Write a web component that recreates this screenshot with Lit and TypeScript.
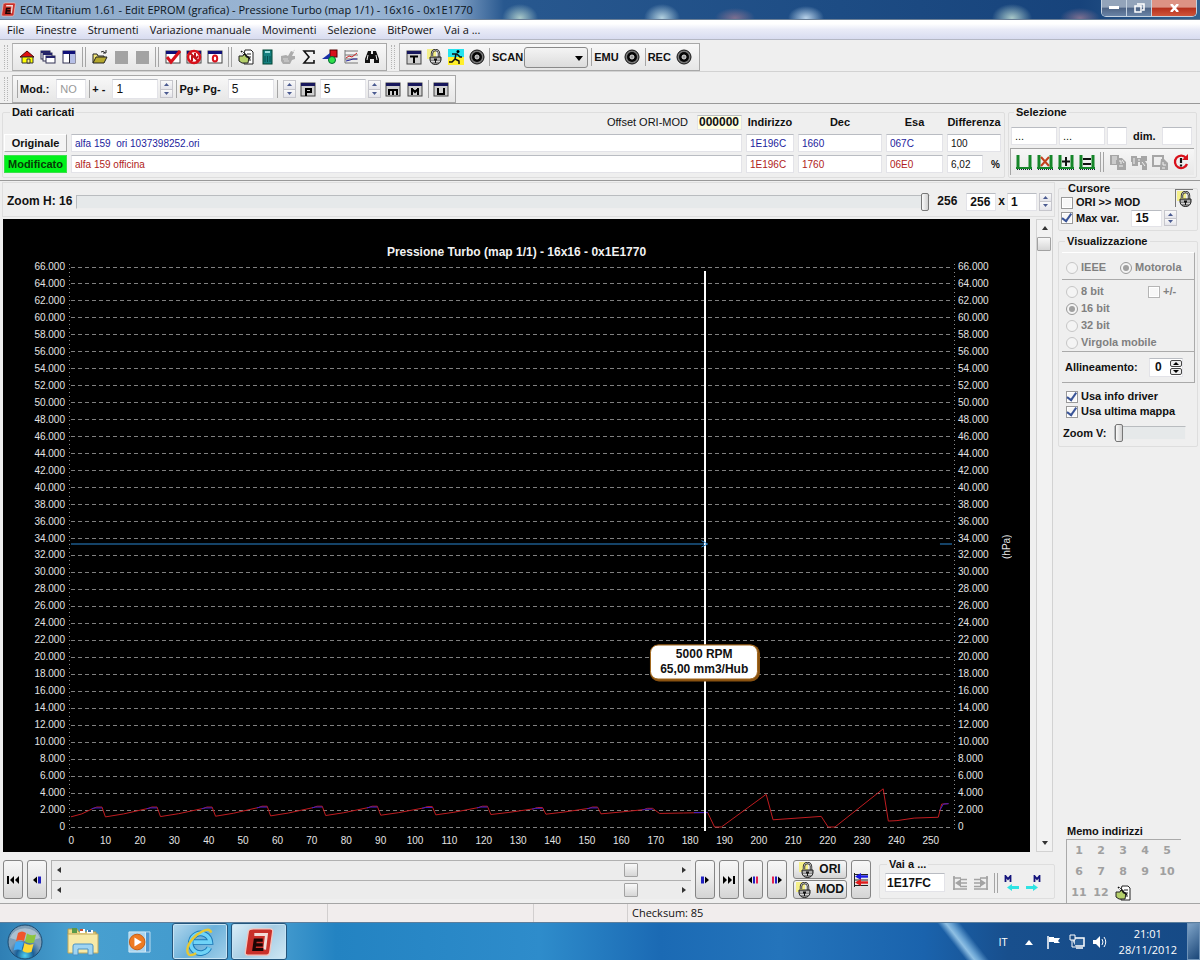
import { LitElement, html, svg, css, nothing } from "lit";
import { customElement, property } from "lit/decorators.js";
import { styleMap } from "lit/directives/style-map.js";

/* ---------- icons ---------- */

const windowFrame = svg`<rect x="1" y="2" width="14" height="12" fill="#fff" stroke="#444"/><rect x="1" y="2" width="14" height="3" fill="#101078"/>`;
const tile = (glyph: unknown) => svg`
  <rect x="1" y="2" width="14" height="13" fill="#d0d0d0" stroke="#444"/>
  <rect x="1" y="2" width="14" height="3" fill="#17175c"/>
  <g fill="none" stroke="#000" stroke-width="2">${glyph}</g>`;
const padlock = (x: number) => svg`
  <path d="M${x + 2} 7V4.500a3.500 3.500 0 0 1 7 0V8" fill="none" stroke="#222" stroke-width="2.400"/>
  <path d="M${x + 2} 7V4.500a3.500 3.500 0 0 1 7 0V8" fill="none" stroke="#ddd" stroke-width=".8"/>
  <path d="M${x} 8h11v3q-1 4.500-5.500 4.500t-5.500-4.500z" fill="#8a8a8a" stroke="#222"/>
  <path d="M${x + 1} 10h9M${x + 1} 12.500h9" stroke="#d5d5d5"/>
  <path d="M${x + 4} 9.500h3v2h-1v2.500h-1v-2.500h-1z" fill="#111"/>`;
const comb = svg`<path d="M2 1v13M14 1v13" stroke="#16862a" stroke-width="3"/><path d="M0 14h16" stroke="#16862a" stroke-width="2"/><path d="M1 15.500h15" stroke="#123" stroke-dasharray="1 1"/>`;

const icons: Record<string, unknown> = {
  app: svg`<path d="M5 1h9q1.500 0 1.300 1.500l-1.600 11q-.2 1.500-1.700 1.500H2Q.500 15 .7 13.500L2.300 2.500Q2.500 1 5 1z" fill="#c9302a" stroke="#f3c5bf" stroke-width=".7"/>
    <path d="M5.500 4h6.500l-1 8" fill="none" stroke="#f2dcd8" stroke-width="1.500"/><path d="M10 7H6l-.7 5h5M6 9.500h4" fill="none" stroke="#1c0504" stroke-width="1.700"/>`,
  home: svg`<path d="M1 8l7-6 7 6z" fill="#e01010" stroke="#500"/><path d="M3 8h11v6H3z" fill="#ff0" stroke="#333"/><path d="M8 10h3v4H8z" fill="#fff08a" stroke="#333"/>`,
  cascade: svg`<rect x="1" y="2" width="9" height="8" fill="#fff" stroke="#335"/><rect x="1" y="2" width="9" height="2" fill="#22226a"/><rect x="3" y="4" width="9" height="8" fill="#fff" stroke="#335"/><rect x="3" y="4" width="9" height="2" fill="#22226a"/><rect x="6" y="7" width="9" height="7" fill="#fff" stroke="#335"/><rect x="6" y="7" width="9" height="2" fill="#22226a"/>`,
  tile: svg`<rect x="2" y="2" width="12" height="12" fill="#fff" stroke="#335"/><rect x="2" y="2" width="12" height="3" fill="#101078"/><rect x="9" y="5" width="5" height="9" fill="#b6bfe6"/><path d="M8.500 5v9" stroke="#223"/>`,
  open: svg`<path d="M1 14V5h4l1 2h6v2" fill="#f3e77a" stroke="#222"/><path d="M1 14l3-6h11l-3 6z" fill="#b6a92e" stroke="#222"/><path d="M9 3q3-2 4 1M11 4h3V1" fill="none" stroke="#222"/>`,
  blank: svg`<rect x="2" y="2" width="13" height="13" fill="#a3a3a3"/>`,
  check: svg`${windowFrame}<path d="M2 8l4 5 9-11" fill="none" stroke="#d8111b" stroke-width="3"/>`,
  forbid: svg`${windowFrame}<circle cx="8" cy="8" r="6" fill="#fff" stroke="#d8111b" stroke-width="2.500"/><path d="M4 4l8 8M9 4v5M6 7v5M10 10l2-3" stroke="#c01018" stroke-width="2"/>`,
  zero: svg`${windowFrame}<ellipse cx="8" cy="9.500" rx="2.200" ry="3" fill="none" stroke="#d8111b" stroke-width="2"/>`,
  note: svg`<path d="M7 1h6l2 2v12H6V5z" fill="#fff" stroke="#222"/><path d="M9 5h4M9 8h4M10 11h3" stroke="#222"/><path d="M1 7h4l1-2h2v3h3l-1 6H4l-3-2z" fill="#b4cf6a" stroke="#222"/><path d="M3 2l9 8" stroke="#111" stroke-width="1.500"/><path d="M4 3l2 2" stroke="#fff"/>`,
  calc: svg`<rect x="4" y="1" width="9" height="14" fill="#168080" stroke="#043"/><path d="M6 3h5" stroke="#9dd" stroke-width="2"/><path d="M6 7v6M8.500 7v6M11 7v6" stroke="#065050"/>`,
  hand: svg`<path d="M1 7l5-1 2 1 3-5 3 1-2 4h3v3l-3 1-2 4H3l-2-3z" fill="#ababab"/><path d="M3 10h5M4 12h5M12 3l3-2" stroke="#d6d6d6"/>`,
  sum: svg`<path d="M13 5V2H3l5 6-5 6h10v-3" fill="none" stroke="#111" stroke-width="1.600"/>`,
  shapes: svg`<rect x="8" y="1" width="7" height="7" fill="#d8111b" stroke="#500"/><path d="M0 10l8-6v6z" fill="#1b2fa8"/><circle cx="10" cy="11" r="3.500" fill="#2fe04a" stroke="#063"/>`,
  lines: svg`<path d="M2 1v13h13M2 2h13M2 6h13M2 10h13" fill="none" stroke="#777"/><path d="M3 9l3-2 3 1 5-4" fill="none" stroke="#c22"/><path d="M3 12l4-1 3-1 4 0" fill="none" stroke="#229"/>`,
  find: svg`<path d="M4 2h3v3h2V2h3l3 8v4h-5v-4H6v4H1v-4z" fill="#111"/><path d="M4 6l-1 5M12 6l1 5" stroke="#eee"/>`,
  T: tile(svg`<path d="M4 7.500h8M8 7v7"/>`),
  P: tile(svg`<path d="M6 15V8h5v3H6"/>`),
  m: tile(svg`<path d="M4 14V9h8v5M8 9v5"/>`),
  M: tile(svg`<path d="M5 14V7M11 14V7M5 8l3 3 3-3"/>`),
  U: tile(svg`<path d="M5 7v6h6V7"/>`),
  lock: svg`<rect x="0" y="0" width="9" height="10" fill="#f5f08a"/>${padlock(3)}`,
  run: svg`<rect width="16" height="8" fill="#25e3ef"/><rect y="8" width="16" height="8" fill="#ffef29"/><circle cx="10" cy="2.500" r="1.500"/><path d="M4 5l5 0 3 3h2M8 5l-1 5 4 2v3M7 10l-3 3-3 0" fill="none" stroke="#111" stroke-width="1.500"/>`,
  disc: svg`<circle cx="8" cy="8" r="7" fill="#777" stroke="#111"/><circle cx="8" cy="8" r="5" fill="#050505"/><circle cx="8" cy="8" r="2" fill="#999" stroke="#ddd"/>`,
  sel1: comb,
  sel2: svg`${comb}<path d="M4 3l8 9M12 3l-8 9" stroke="#c4411d" stroke-width="2"/>`,
  sel3: svg`${comb}<path d="M8 3v9M4 7.500h8" stroke="#111" stroke-width="2"/>`,
  sel4: svg`${comb}<path d="M4 5h8M4 10h8" stroke="#111" stroke-width="2"/>`,
  cp1: svg`<path d="M0 1h9v3h3l4 4v8H7v-5H0z" fill="#a6a6a6"/><path d="M2 3h5M2 5h5M2 7h4M2 9h4M9 7h2v3M9 12h4M12 6l2 3" stroke="#f0f0f0" fill="none"/>`,
  cp2: svg`<path d="M0 2h6v2h4V2h6v5h-2l2 3v6h-5v-5H9V8H7v4H1V8H0z" fill="#a6a6a6"/><path d="M3 4v6M11 8l3 4M8 5v2" stroke="#f0f0f0"/>`,
  cp3: svg`<path d="M1 2h10v10H1z" fill="#eee" stroke="#a6a6a6" stroke-width="2"/><path d="M9 5h3l4 4v7H8v-3z" fill="#a6a6a6"/><path d="M11 8v3h3M10 14h3" fill="none" stroke="#f0f0f0"/>`,
  reload: svg`<path d="M13 4a6.200 6.200 0 1 0 1 6" fill="none" stroke="#d8111b" stroke-width="2.300"/><path d="M15 0v6h-6z" fill="#d8111b"/><path d="M8 4v5M8 10.500v2" stroke="#111" stroke-width="2.200"/>`,
  first: svg`<path d="M2 4h2v8H2zM9 4v8L5 8zM14 4v8l-4-4z"/>`,
  prev: svg`<path d="M8 4.500v7L4 8z"/><path d="M9 4.500h3v7H9z" fill="#2020c0"/>`,
  next: svg`<path d="M4 4.500h3v7H4z" fill="#2020c0"/><path d="M8 4.500v7l4-3.500z"/>`,
  last: svg`<path d="M2 4v8l4-4zM7 4v8l4-4zM12 4h2v8h-2z"/>`,
  prev2: svg`<path d="M7 4.500v7L3 8z"/><path d="M8 4.500h2v7H8z" fill="#2020c0"/><path d="M11 4.500h2v7h-2z" fill="#e02050"/>`,
  next2: svg`<path d="M3 4.500h2v7H3z" fill="#e02050"/><path d="M6 4.500h2v7H6z" fill="#2020c0"/><path d="M9 4.500v7L13 8z"/>`,
  swap: svg`<path d="M1.500 1v14M1 2.500h14M1 8h14M1 13.500h14" stroke="#222" fill="none"/><path d="M4 4.500h11" stroke="#1a1ae0" stroke-width="2.400"/><path d="M8 1v7L2 4.500z" fill="#1a1ae0"/><path d="M4 10.500h11" stroke="#e01a1a" stroke-width="2.400"/><path d="M8 7v7l-6-3.500z" fill="#e01a1a"/>`,
  goLeft: svg`<path d="M2 1v14M1 3h8M8 8h7M8 4.500h7M8 11.500h7M1 14h14" fill="none" stroke="#a3a3a3" stroke-width="1.700"/><path d="M9 4v8L3 8z" fill="#a3a3a3"/>`,
  goRight: svg`<path d="M14 1v14M15 3H7M8 8H1M8 4.500H1M8 11.500H1M15 14H1" fill="none" stroke="#a3a3a3" stroke-width="1.700"/><path d="M7 4v8l6-4z" fill="#a3a3a3"/>`,
  memLeft: svg`<path d="M1.500 7V1l2.500 3 2.500-3v6" fill="none" stroke="#14147c" stroke-width="1.800"/><path d="M6 12.500h9" stroke="#2fe3e3" stroke-width="3"/><path d="M8 9v7l-5-3.500z" fill="#2fe3e3"/>`,
  memRight: svg`<path d="M9.500 7V1l2.500 3 2.500-3v6" fill="none" stroke="#14147c" stroke-width="1.800"/><path d="M1 12.500h9" stroke="#2fe3e3" stroke-width="3"/><path d="M8 9v7l5-3.500z" fill="#2fe3e3"/>`,
};

const icon = (name: string, size = 16) => html`<svg
  class="icon" width=${size} height=${size} viewBox="0 0 16 16" fill="#000" aria-hidden="true">${icons[name]}</svg>`;

/* ---------- shared styles ---------- */

const controls = css`
  * { box-sizing: border-box; }
  button { font: inherit; color: inherit; background: none; border: 0; padding: 0; display: inline-flex; align-items: center; justify-content: center; flex: none; }
  input[type="text"] { font: inherit; color: inherit; min-width: 0; margin: 0; padding: 0 3px; background: #fff; border: 1px solid #e3e3e8; border-top-color: #b9bcc2; border-radius: 0; height: 18px; }
  .icon { display: block; flex: none; }
  .sep { width: 1px; align-self: stretch; background: #a5a5a5; flex: none; }
  .sep2 { width: 4px; height: 20px; border: solid #a5a5a5; border-width: 0 1px; margin: 0 3px; flex: none; }
`;

@customElement("spin-buttons")
export class SpinButtons extends LitElement {
  @property() label = "";
  static styles = [controls, css`
    :host { display: inline-flex; flex-direction: column; width: 13px; height: 18px; flex: none; }
    button { flex: 1; background: linear-gradient(#fafafa, #e4e4ea); border: 1px solid #c6c6cc; }
    button + button { border-top: 0; }
    svg { display: block; }
  `];
  render() {
    return html`
      <button aria-label="${this.label} +"><svg width="5" height="3"><path d="M0 3l2.500-3L5 3z" fill="#4a5a90"/></svg></button>
      <button aria-label="${this.label} -"><svg width="5" height="3"><path d="M0 0l2.500 3L5 0z" fill="#4a5a90"/></svg></button>`;
  }
}

/* ---------- chart ---------- */

const SPAN = 256;
const TOP = 66000;
const yTicks = Array.from({ length: 34 }, (_, i) => TOP - i * 2000);
const xTicks = Array.from({ length: 26 }, (_, i) => i * 10);
const fmt = (v: number) => (v === 0 ? "0" : `${v / 1000}.000`);

type Point = [number, number];
const peaks = [2350, 2350, 2350, 2450, 2450, 2450, 2400, 2450, 2300, 2350, 2200];
const ramps: Point[] = [];
const crests: Point[][] = [];
peaks.forEach((peak, i) => {
  const end = 9 + i * 16;
  const low = i === 0 ? 1200 : 1150 + i * 40;
  const start = i === 0 ? 0 : end - 15;
  ramps.push([start, low], [start + (end - start) * 0.35, low + (peak - low) * 0.3], [end - 2.5, peak - 150], [end - 1.5, peak], [end, peak]);
  crests.push([[end - 3, peak - 200], [end - 2, peak - 100], [end, peak - 100]]);
});
const trace: Point[] = [
  ...ramps, [171, 1600], [178, 1650], [185, 1700], [187, 0], [189, 0], [202, 3850], [204, 850],
  [218, 1250], [220, 0], [222, 0], [236, 4500], [237.5, 700], [240, 750], [245, 1050], [252, 1150], [253, 2700], [255, 2750],
];
const poly = (points: Point[]) => points.map(([x, v]) => `${x},${TOP - v}`).join(" ");

@customElement("map-chart")
export class MapChart extends LitElement {
  @property({ type: Number }) cursor = 184;
  static styles = css`
    :host { display: grid; grid-template-columns: 62px minmax(0, 1fr) 31px 24px; column-gap: 6px; grid-template-rows: 18px minmax(300px, 1fr) 12px;
      background: #000; color: #e4e4e4; padding: 24px 11px 7px 0; font-size: 10px; line-height: 12px; row-gap: 6px; min-width: 0; }
    .title { grid-column: 1 / -1; margin-right: -11px; font-size: 12px; font-weight: bold; line-height: 18px; text-align: center; color: #f2f2f2; }
    .scale { display: flex; flex-direction: column; justify-content: space-between; margin: -6px 0; }
    .left { text-align: right; }
    .plot { position: relative; }
    .plot::before, .plot::after { content: ""; position: absolute; top: -3px; bottom: -4px; width: 1px; left: -2px;
      background: repeating-linear-gradient(#8a8a8a 0 1px, #000 1px 4px); }
    .plot::after { left: auto; right: -3px; }
    .lines { position: absolute; inset: 0; width: 100%; height: 100%; overflow: visible; }
    .lines * { vector-effect: non-scaling-stroke; fill: none; }
    .grid { stroke: #808080; stroke-dasharray: 4 3; shape-rendering: crispEdges; }
    .flat { stroke: #2a86d0; }
    .mod { stroke: #c01c20; }
    .ori { stroke: #4020c8; }
    .cursor { position: absolute; top: 4px; bottom: -4px; width: 2px; background: #fff; }
    .tip { position: absolute; top: 70.600%; transform: translate(-50%, -50%); background: #fff; color: #111; font-size: 12px; font-weight: bold;
      line-height: 15px; padding: 1px 9px 2px; text-align: center; white-space: nowrap; border: 1px solid #a0661c; border-radius: 8px; box-shadow: 1px 1px 0 1px #8a5210; }
    .unit { writing-mode: vertical-rl; transform: rotate(180deg); text-align: center; line-height: 24px; }
    .ticks { grid-column: 1 / 3; display: grid; grid-template-columns: repeat(26, minmax(0, 1fr)); text-align: center; margin: 2px 4px 0 51px; }
  `;
  render() {
    const at = { left: `${(this.cursor / SPAN) * 100}%` };
    return html`
      <div class="title">Pressione Turbo (map 1/1) - 16x16 - 0x1E1770</div>
      <div class="scale left">${yTicks.map((v) => html`<span>${fmt(v)}</span>`)}</div>
      <div class="plot">
        <svg class="lines" viewBox="0 0 ${SPAN} ${TOP}" preserveAspectRatio="none" aria-hidden="true">
          ${yTicks.map((v) => svg`<line class="grid" x1="0" x2=${SPAN} y1=${TOP - v} y2=${TOP - v}></line>`)}
          <polyline class="flat" points="0,32647 184,32647"></polyline>
          <polyline class="flat" points="252.500,32647 256,32647"></polyline>
          <polyline class="mod" points=${poly(trace)}></polyline>
          ${crests.map((c) => svg`<polyline class="ori" points=${poly(c)}></polyline>`)}
          <polyline class="ori" points=${poly([[181, 1700], [185, 1700]])}></polyline>
          <polyline class="ori" points=${poly([[252.5, 2000], [253.5, 2700], [255, 2750]])}></polyline>
        </svg>
        <div class="cursor" style=${styleMap(at)}></div>
        <svg class="lines" viewBox="0 0 ${SPAN} ${TOP}" preserveAspectRatio="none" aria-hidden="true">
          <polyline class="flat" points="183.200,32250 185,32647 183.200,33000"></polyline>
        </svg>
        <div class="tip" style=${styleMap(at)}>5000 RPM<br />65,00 mm3/Hub</div>
      </div>
      <div class="scale">${yTicks.map((v) => html`<span>${fmt(v)}</span>`)}</div>
      <div class="unit">(hPa)</div>
      <div class="ticks">${xTicks.map((v) => html`<span>${v}</span>`)}</div>`;
  }
}

/* ---------- application ---------- */

const menu = ["File", "Finestre", "Strumenti", "Variazione manuale", "Movimenti", "Selezione", "BitPower", "Vai a ..."];
const tools = [["home", "cascade", "tile"], ["open", "blank", "blank"], ["check", "forbid", "zero"], ["note", "calc", "hand", "sum", "shapes", "lines", "find"]];
const tool = (name: string) => html`<button class="tool" aria-label=${name}>${icon(name)}</button>`;

@customElement("app-root")
export class AppRoot extends LitElement {
  static styles = [controls, css`
    :host { display: flex; flex-direction: column; min-height: 100vh; background: #efefef; color: #111; font: 11px/13px "Liberation Sans", Arial, sans-serif; }
    .b { font-weight: bold; }

    .titlebar { height: 20px; display: flex; align-items: center; gap: 4px; padding: 0 3px 0 1px; border-bottom: 1px solid #6b7f96; color: #0b1420; font: 11px/16px "Open Sans", "Noto Sans", sans-serif;
      background: radial-gradient(ellipse 18px 14px at 520px 18px, #a9c9c9, transparent), radial-gradient(ellipse 18px 14px at 662px 18px, #b4d2e0, transparent),
        radial-gradient(ellipse 20px 10px at 735px 18px, #7d6f90, transparent), radial-gradient(ellipse 18px 12px at 806px 18px, #b9d3ea, transparent),
        radial-gradient(ellipse 20px 14px at 1012px 18px, #a9c9c9, transparent), radial-gradient(ellipse 20px 10px at 1080px 18px, #7d6f90, transparent),
        linear-gradient(90deg, #8da9c9, #9db8d6 30%, #7f9fc4 38%, #28588f 42%, #1d4c84 70%, #17437b 90%, #34628f); }
    .titlebar span { flex: 1; white-space: nowrap; overflow: hidden; }
    .caption { display: flex; align-self: flex-start; border: 1px solid #c4d2e0; border-top: 0; border-radius: 0 0 5px 5px; overflow: hidden; }
    .caption button { width: 25px; height: 16px; border-right: 1px solid #c4d2e0; background: linear-gradient(#93a4ba 45%, #4d6384 50%, #6a84a6); }
    .caption .close { width: 44px; border: 0; background: linear-gradient(#dd9384 45%, #b5301c 50%, #d0553a); }

    .menu { height: 20px; display: flex; align-items: center; gap: 11px; padding: 0 7px; font: 11px/16px "Open Sans", "Noto Sans", sans-serif; background: linear-gradient(#fff 20%, #e9ebf7 50%, #d8dcf0); border-bottom: 1px solid #b4b7c4; }
    .menu button { white-space: nowrap; }

    .row { display: flex; padding: 3px 4px 0; gap: 4px; border-bottom: 1px solid #d2d2d2; }
    .row.last { border-bottom-color: #999; }
    .grip { width: 4px; margin: 2px 0; border: dotted #b5b5b5; border-width: 0 1px; flex: none; }
    .bar { display: flex; align-items: center; height: 28px; border: 1px solid #a8a8a8; border-left-color: #b8b8b8; background: linear-gradient(#f8f8f8, #e6e6e6); padding: 0 4px 0 3px; }
    .bar.second { gap: 2px; }
    .tool { width: 21px; height: 21px; }
    .second .tool { width: 20px; }
    .bar .sep { align-self: center; height: 18px; margin: 0 2px; }
    .bar.second .sep { margin: 0 0 0 1px; }
    .bar select { width: 64px; height: 21px; border: 1px solid #8a8a8a; border-radius: 3px; background: linear-gradient(#f4f4f4, #dcdcdc); margin: 0 1px; appearance: none; }
    .drop { position: relative; display: flex; }
    .drop svg { position: absolute; right: 6px; top: 9px; pointer-events: none; }
    .bar input[type="text"] { height: 20px; font-size: 12px; font-weight: normal; }
    .bar input[type="text"]:disabled { color: #999; font-size: 11px; }
    .lead { margin-left: 3px; }
    .bar label.mid { margin-right: 5px; white-space: nowrap; }
    .w20 { width: 20px; flex: none; } .w30 { width: 30px; flex: none; } .w46 { width: 46px; flex: none; }

    fieldset { min-width: 0; margin: 0; padding: 0; border: 1px solid #dedede; border-radius: 2px; }
    legend { font-weight: bold; line-height: 13px; margin-left: 7px; padding: 0 2px; }

    .data { display: flex; gap: 3px; padding: 2px 3px 2px 2px; border-bottom: 1px solid #999; }
    .loaded { flex: 1; }
    .files { display: grid; grid-template-columns: 63px minmax(0, 1fr) 48px 84px 57px 54px; column-gap: 4px; row-gap: 3px; margin: -4px 3px 4px 1px; font-size: 10px; }
    .files > .head { height: 16px; font-size: 11px; line-height: 15px; font-weight: bold; text-align: center; display: flex; justify-content: center; white-space: nowrap; }
    .files > .offset { grid-column: 1 / 3; font-weight: normal; justify-content: flex-end; gap: 9px; }
    .files button { font-weight: bold; font-size: 11px; background: #f4f4f4; border: 1px solid #fff; border-right-color: #aaa; border-bottom-color: #aaa; height: 18px; width: 63px; }
    .files .on { background: #00f11a; border-color: #3be04a; color: #063a06; }
    .files input[type="text"] { width: 100%; }
    .files .offset input[type="text"] { width: 45px; height: 15px; font-size: 12px; font-weight: bold; background: #ffffe1; padding: 0 1px; }
    .files input.blue { color: #1c1c9c; }
    .files input.red { color: #b01c20; }
    .pct { display: flex; align-items: center; gap: 8px; font-weight: bold; padding-right: 1px; }
    .files .pct input[type="text"] { font-weight: normal; flex: 1; }

    .select { width: 189px; flex: none; }
    .select legend { margin-left: 5px; }
    .range { display: flex; align-items: center; gap: 2px; margin: 8px 4px 3px 2px; font-weight: bold; }
    .range input { font-weight: normal; }
    .range label { margin: 0 4px; }
    .strip { display: flex; align-items: center; height: 27px; margin: 0 2px 0 1px; padding-left: 2px; border: solid #a5a5a5; border-width: 1px 0 0 1px; background: linear-gradient(#f6f6f6, #e8e8e8); }

    .main { flex: 1; display: flex; gap: 3px; padding: 1px 2px 0 0; }
    .left { flex: 1; min-width: 0; display: flex; flex-direction: column; }
    .zoom { display: flex; align-items: center; gap: 2px; height: 35px; margin: 0 0 2px 2px; padding: 4px 2px 0 4px; border: 1px solid #dedede; font-size: 12px; font-weight: bold; }
    .zoom input[type="range"] { flex: 1; min-width: 0; margin-left: 2px; }
    .zoom output { margin: 0 7px 0 5px; }
    input[type="range"] { appearance: none; margin: 0; background: none; height: 18px; }
    input[type="range"]::-webkit-slider-runnable-track { height: 14px; background: #e6e9ea; border: 1px solid #b9bcbf; border-right-color: #eee; border-bottom-color: #eee; }
    input[type="range"]::-webkit-slider-thumb { appearance: none; width: 8px; height: 18px; margin-top: -3px; border: 1px solid #777; border-radius: 2px; background: linear-gradient(90deg, #fafafa, #d0d0d0); }

    .canvas { flex: 1; display: flex; gap: 6px; padding: 0 2px 0 3px; }
    map-chart { flex: 1; }
    .vbar { width: 17px; display: flex; flex-direction: column; align-items: center; background: #f2f2f2; border: 1px solid #d2d2d2; }
    .vbar button, .hbar button { width: 15px; height: 17px; }
    .vbar input[type="range"] { writing-mode: vertical-lr; flex: 1; width: 15px; min-height: 0; }
    .vbar input[type="range"]::-webkit-slider-runnable-track { width: 15px; height: 100%; border: 0; background: none; }
    .vbar input[type="range"]::-webkit-slider-thumb, .hbar input[type="range"]::-webkit-slider-thumb { width: 14px; height: 14px; margin: 0; border-color: #a2a2a2; border-radius: 1px; background: linear-gradient(#f8f8f8, #d6d6d6); }

    .nav { display: flex; gap: 4px; padding: 8px 0 4px 3px; height: 51px; }
    .key { width: 20px; height: 39px; border: 1px solid #858585; border-radius: 3px; background: linear-gradient(#f7f7f7, #e9e9e9 50%, #d4d4d4); }
    .bars { flex: 1; min-width: 0; display: flex; flex-direction: column; border: solid #b0b0b0; border-width: 1px 0 0 1px; }
    .hbar { flex: 1; display: flex; align-items: center; background: #ececec; }
    .hbar + .hbar { border-top: 1px solid #b0b0b0; }
    .hbar input[type="range"] { flex: 1; min-width: 0; height: 14px; }
    .hbar input[type="range"]::-webkit-slider-runnable-track { border: 0; background: none; }
    .pair { display: flex; flex-direction: column; gap: 1px; margin: 0 0 0 2px; }
    .pair .key { width: 54px; height: 19px; font-size: 12px; font-weight: bold; gap: 4px; }
    .goto { width: 176px; margin: -2px 0 0 4px; flex: none; }
    .goto div { display: flex; align-items: center; padding: 1px 0 0 5px; }
    .goto input[type="text"] { width: 60px; height: 19px; font-size: 12px; font-weight: bold; margin-right: 4px; padding: 0 1px; }

    .side { width: 140px; flex: none; display: flex; flex-direction: column; font-weight: bold; }
    .side label { display: flex; align-items: center; gap: 3px; white-space: nowrap; }
    .side label input { margin: 0; }
    .cursorbox { position: relative; height: 49px; padding-left: 2px; }
    .cursorbox .lockbtn { position: absolute; right: 4px; top: -6px; width: 18px; height: 18px; border: solid #777; border-width: 1px 0 0 1px; }
    .cursorbox label { height: 15px; }
    .cursorbox legend { margin-left: 5px; }
    .line { display: flex; align-items: center; height: 16px; }
    .line input[type="text"] { width: 31px; height: 17px; font-size: 12px; margin: 0 2px 0 12px; }
    .side spin-buttons { height: 16px; }
    input[type="checkbox"], input[type="radio"] { flex: none; }
    input[type="checkbox"] { appearance: none; width: 12px; height: 12px; border: 1px solid #999; background: #f7f7f7; box-shadow: inset 0 0 0 1px #fff; display: grid; place-items: center; }
    input[type="checkbox"]:disabled { border-color: #b5b5b5; }
    input[type="checkbox"]:checked::after { content: ""; width: 4px; height: 8px; border: solid #3a5598; border-width: 0 2px 2px 0; transform: rotate(35deg) translate(-1px, -1px); }
    input[type="radio"] { appearance: none; width: 12px; height: 12px; border: 1px solid #c6c6c6; border-radius: 50%; background: #f4f4f4; display: grid; place-items: center; }
    input[type="radio"]:checked { border-color: #999; }
    input[type="radio"]:checked::after { content: ""; width: 6px; height: 6px; border-radius: 50%; background: #a0a0a0; }
    .view { margin-top: 4px; padding: 0 2px 4px 3px; }
    .view legend { margin-left: 3px; }
    .inset { border: solid #aaa; border-width: 0 1px 1px 0; padding: 0 4px; color: #808080; }
    .inset.top { margin-top: 4px; height: 28px; display: flex; align-items: center; gap: 14px; border-top: 1px solid #fff; padding-top: 3px; }
    .inset.bits { height: 72px; display: grid; grid-template-columns: 82px 1fr; row-gap: 4px; padding: 5px 0 0 4px; align-content: start; }
    .inset.bits label:last-child { grid-column: 1 / -1; }
    .inset.align { display: flex; align-items: center; justify-content: space-between; height: 31px; color: #111; padding: 0 11px 0 3px; }
    .field { position: relative; display: flex; }
    .field input[type="text"] { width: 34px; height: 19px; font-size: 12px; padding: 0 13px 0 5px; }
    .field .steps { position: absolute; right: 1px; top: 2px; display: flex; flex-direction: column; gap: 1px; }
    .steps button { width: 12px; height: 7px; border: 1px solid #444; border-radius: 2px; background: #eee; }
    .opts { padding: 7px 0 0 4px; display: grid; row-gap: 2px; }
    .side .vz { margin: 6px 9px 0 1px; gap: 8px; }
    .vz input[type="range"] { flex: 1; min-width: 0; }
    .memo { margin-top: auto; border-color: transparent; border-bottom: 0; }
    .memo legend { margin-left: 6px; }
    .memo div { display: grid; grid-template-columns: repeat(5, 22px); grid-auto-rows: 21px; width: 115px; margin: 1px 0 0 7px; padding-left: 1px; border: solid #aaa; border-width: 1px 0 0 1px; color: #a0a0a0; font: bold 11px/13px "DejaVu Sans", sans-serif; }

    .status { display: grid; grid-template-columns: 328px 206px 94px 1fr; height: 19px; background: #f1eded; border-top: 1px solid #a5a5a5; font: 11px/17px "Open Sans", "Noto Sans", sans-serif; }
    .status span { border-right: 1px solid #d2cfcf; padding-left: 4px; }
    .status span:last-child { border: 0; }

    .taskbar { height: 38px; display: flex; align-items: center; border-top: 1px solid #5c7e9c; color: #fff; font: 11px/16px "Open Sans", "Noto Sans", sans-serif; padding-left: 5px;
      background: linear-gradient(52deg, transparent 78.600%, #8fc0e4 79.300%, #6aa4d4 79.700%, transparent 80.500%), linear-gradient(90deg, #2f7fb4, #48a0d0 6%, #3f97cc 24%, #2383c2 28%, #2e8ccb 45%, #1b6ab4 55%, #2474bb 65%, #1a63ad 77%, #184f8d 84%, #164a86 100%); }
    .taskbar > button { height: 37px; }
    .orb { width: 40px; margin-right: 10px; } .quick { width: 56px; }
    .taskbar .open { width: 56px; margin-left: 3px; border: 1px solid #23557c; border-radius: 3px; background: linear-gradient(135deg, #b3d8ee, #6cb1da 50%, #a2d0ea); box-shadow: inset 0 0 0 1px #c6e4f5; }
    .taskbar .quick + .open { margin-left: 5px; }
    .taskbar .open + .open { background: linear-gradient(135deg, #dceef8, #a5cce3 50%, #d0e8f5); }
    .tray { margin-left: auto; display: flex; align-items: center; align-self: stretch; gap: 7px; }
    .tray time { text-align: center; margin: 0 3px 0 4px; }
    .tray .gap { margin: 0 -2px 0 2px; }
    .desk { width: 13px; align-self: stretch; border: 1px solid #6f93b8; background: linear-gradient(135deg, #7fa4c8, #1a4678); }
  `];

  private arrow(dir: string) {
    const d: Record<string, string> = { up: "M0 4l3-4 3 4z", down: "M0 1l3 4 3-4z", left: "M4 0v6L0 3z", right: "M1 0v6l4-3z" };
    return html`<svg class="icon" width="6" height="6" aria-hidden="true"><path d=${d[dir]} fill="#333"></path></svg>`;
  }

  private fileRow(name: string, cls: string, text: string, vals: string[], on: boolean) {
    return html`
      <button class=${on ? "on" : ""}>${name}</button>
      <input type="text" class=${cls} aria-label=${name} .value=${text} />
      ${["Indirizzo", "Dec", "Esa"].map((h, i) => html`<input type="text" class=${cls} aria-label="${h} ${name}" .value=${vals[i]} />`)}`;
  }

  private toolbars() {
    return html`
      <div class="row">
        <div class="grip"></div>
        <div class="bar">${tools.map((g, i) => html`${i ? html`<i class="sep2"></i>` : nothing}${g.map(tool)}`)}</div>
        <div class="grip"></div>
        <div class="bar b">
          ${["T", "lock", "run", "disc"].map(tool)}<i class="sep"></i>
          <label for="scan">SCAN</label>
          <span class="drop"><select id="scan"><option></option></select><svg width="8" height="5" aria-hidden="true"><path d="M0 0h8L4 5z"/></svg></span>
          <i class="sep"></i>EMU&nbsp;${tool("disc")}<i class="sep"></i>REC&nbsp;${tool("disc")}
        </div>
      </div>
      <div class="row last">
        <div class="grip"></div>
        <div class="bar b second">
          <i class="sep"></i><label class="mid" for="mod">Mod.:</label>
          <input id="mod" class="w30" type="text" disabled .value=${"NO"} />
          <i class="sep"></i><label class="mid" for="step">+ -</label>
          <input id="step" class="w46" type="text" .value=${"1"} /><spin-buttons label="Passo"></spin-buttons>
          <i class="sep"></i><label class="mid" for="pg">Pg+ Pg-</label>
          <input id="pg" class="w46" type="text" .value=${"5"} /><i class="sep"></i>
          <spin-buttons class="lead" label="Pagina"></spin-buttons>${tool("P")}
          <input class="w46" type="text" aria-label="P" .value=${"5"} /><spin-buttons label="P"></spin-buttons>
          ${tool("m")}${tool("M")}<i class="sep"></i>${tool("U")}
        </div>
      </div>`;
  }

  private dataPanel() {
    return html`<div class="data">
      <fieldset class="loaded">
        <legend>Dati caricati</legend>
        <div class="files">
          <label class="head offset">Offset ORI-MOD <input type="text" .value=${"000000"} /></label>
          <span class="head">Indirizzo</span><span class="head">Dec</span><span class="head">Esa</span><span class="head">Differenza</span>
          ${this.fileRow("Originale", "blue", "alfa 159  ori 1037398252.ori", ["1E196C", "1660", "067C"], false)}
          <input type="text" aria-label="Differenza" .value=${"100"} />
          ${this.fileRow("Modificato", "red", "alfa 159 officina", ["1E196C", "1760", "06E0"], true)}
          <label class="pct"><input type="text" .value=${"6,02"} />%</label>
        </div>
      </fieldset>
      <fieldset class="select">
        <legend>Selezione</legend>
        <div class="range">
          <input class="w46" type="text" aria-label="Da" .value=${"..."} />
          <input class="w46" type="text" aria-label="A" .value=${"..."} />
          <input class="w20" type="text" aria-label="Passo" />
          <label for="dim">dim.</label><input id="dim" class="w30" type="text" />
        </div>
        <div class="strip">${["sel1", "sel2", "sel3", "sel4"].map(tool)}<i class="sep2"></i>${["cp1", "cp2", "cp3", "reload"].map(tool)}</div>
      </fieldset>
    </div>`;
  }

  private nav() {
    const key = (n: string) => html`<button class="key" aria-label=${n}>${icon(n)}</button>`;
    const bar = (l: string) => html`<div class="hbar"><button aria-label="${l} indietro">${this.arrow("left")}</button>
      <input type="range" aria-label=${l} min="0" max="1000" .value=${"936"} /><button aria-label="${l} avanti">${this.arrow("right")}</button></div>`;
    return html`<div class="nav">
      ${key("first")}${key("prev")}
      <div class="bars">${bar("Originale")}${bar("Modificato")}</div>
      ${["next", "last", "prev2", "next2"].map(key)}
      <div class="pair"><button class="key">${icon("lock")}ORI</button><button class="key">${icon("lock")}MOD</button></div>
      ${key("swap")}
      <fieldset class="goto"><legend>Vai a ...</legend>
        <div><input type="text" aria-label="Vai a" .value=${"1E17FC"} />${tool("goLeft")}${tool("goRight")}<i class="sep2"></i>${tool("memLeft")}${tool("memRight")}</div>
      </fieldset>
    </div>`;
  }

  private side() {
    const radio = (group: string, text: string, on = false) => html`<label><input type="radio" name=${group} ?checked=${on} disabled />${text}</label>`;
    return html`<div class="side">
      <fieldset class="cursorbox">
        <legend>Cursore</legend>
        <button class="lockbtn" aria-label="Blocca">${icon("lock")}</button>
        <label><input type="checkbox" />ORI &gt;&gt; MOD</label>
        <div class="line"><label><input type="checkbox" checked />Max var.</label>
          <input type="text" aria-label="Max var." .value=${"15"} /><spin-buttons label="Max var."></spin-buttons></div>
      </fieldset>
      <fieldset class="view">
        <legend>Visualizzazione</legend>
        <div class="inset top">${radio("order", "IEEE")}${radio("order", "Motorola", true)}</div>
        <div class="inset bits">
          ${radio("bits", "8 bit")}<label><input type="checkbox" disabled />+/-</label>
          ${radio("bits", "16 bit", true)}<span></span>${radio("bits", "32 bit")}<span></span>${radio("bits", "Virgola mobile")}
        </div>
        <div class="inset align"><label for="al">Allineamento:</label>
          <span class="field"><input id="al" type="text" .value=${"0"} />
            <span class="steps"><button aria-label="Su"><svg width="6" height="3"><path d="M0 3l3-3 3 3z"/></svg></button><button aria-label="Giù"><svg width="6" height="3"><path d="M0 0l3 3 3-3z"/></svg></button></span></span>
        </div>
        <div class="opts">
          <label><input type="checkbox" checked />Usa info driver</label>
          <label><input type="checkbox" checked />Usa ultima mappa</label>
        </div>
        <label class="vz">Zoom V:<input type="range" .value=${"0"} /></label>
      </fieldset>
      <fieldset class="memo">
        <legend>Memo indirizzi</legend>
        <div>${Array.from({ length: 12 }, (_, i) => html`<button>${i + 1}</button>`)}<button aria-label="Note">${icon("note")}</button></div>
      </fieldset>
    </div>`;
  }

  private taskbar() {
    return html`<div class="taskbar">
      <button class="orb" aria-label="Start"><svg width="36" height="36" viewBox="0 0 36 36">
        <defs><radialGradient id="o" cx=".5" cy=".9"><stop offset="0" stop-color="#4fd0f0"/><stop offset=".5" stop-color="#1a5f98"/><stop offset="1" stop-color="#7f9fb8"/></radialGradient></defs>
        <circle cx="18" cy="18" r="17" fill="url(#o)" stroke="#1c4a70"/><path d="M3 14a15.500 13 0 0 1 30 0q-15 6-30 0z" fill="#fff" opacity=".35"/>
        <path d="M11 9q4-3 8 0l-2 8q-4-2-8 0z" fill="#f0552b"/><path d="M20 9.500q4 3 9 1l-2 8q-5 2-9-1z" fill="#8dc63f"/>
        <path d="M8.500 18.500q4-2 8 0l-2 8q-4-2-8 0z" fill="#3fa9f5"/><path d="M17.500 19q4 3 9 1l-2 8q-5 2-9-1z" fill="#fdd835"/></svg></button>
      <button class="quick" aria-label="Esplora risorse"><svg width="32" height="32" viewBox="0 0 32 32">
        <path d="M1 3h9l2 3h17v3H1z" fill="#f0dc8a" stroke="#b5994a"/><path d="M5 2h5v5H5z" fill="#5a9a4a"/><path d="M13 3h5v4h-5zM20 4h6v4h-6z" fill="#fff"/><path d="M13 3h3v2h-3z" fill="#d05030"/><path d="M21 4h3v2h-3z" fill="#3a70b0"/>
        <path d="M1 8h30v19H1z" fill="#f7eaa8" stroke="#c4a95a"/><path d="M6 29V20q0-2 2-2h16q2 0 2 2v9h-5v-6H11v6z" fill="#9fd4f2" stroke="#4a92c4"/></svg></button>
      <button class="quick" aria-label="Media Player"><svg width="24" height="22" viewBox="0 0 26 24">
        <path d="M20 1h5v22h-5z" fill="#4f98d0" stroke="#c6e2f4"/><path d="M2 1h18v22H2z" fill="#a8d4ef" stroke="#d6ecf8"/><circle cx="11" cy="12" r="8.500" fill="#ee7b22" stroke="#c45a10"/><path d="M8 7v10l8-5z" fill="#fff"/></svg></button>
      <button class="open" aria-label="Internet Explorer"><svg width="30" height="30" viewBox="0 0 32 32">
        <path d="M26 22a10.500 10.500 0 1 1 1-6H9" fill="none" stroke="#1b79b8" stroke-width="6"/><path d="M26 22a10.500 10.500 0 1 1 1-6H9" fill="none" stroke="#6fd3f7" stroke-width="4"/>
        <path d="M28 6Q26-1 13 8 0 19 3 28q2 4 9 0" fill="none" stroke="#e8c832" stroke-width="2.500"/></svg></button>
      <button class="open" aria-label="ECM Titanium">${icon("app", 30)}</button>
      <div class="tray"><span>IT</span>
        <svg class="gap" width="24" height="8" viewBox="0 0 24 8"><path d="M8 7l4-5 4 5z" fill="#fff"/></svg>
        <svg width="16" height="16" viewBox="0 0 16 16"><path d="M2 2v13" stroke="#fff" stroke-width="1.500"/><path d="M3 3h5v1h6l-2 3 2 2H8V8H3z" fill="#fff"/></svg>
        <svg width="16" height="16" viewBox="0 0 16 16"><path d="M5 4h10v8H5zM7 14h7" fill="#2a5f98" stroke="#fff" stroke-width="1.500"/><path d="M1 1h5v5H1zM3 6v7h4" fill="#1b4c84" stroke="#fff"/></svg>
        <svg width="16" height="16" viewBox="0 0 16 16"><path d="M1 6h3l4-4v12l-4-4H1z" fill="#fff"/><path d="M10 5q2 3 0 6M12 3q3.500 5 0 10" fill="none" stroke="#fff"/></svg>
        <time datetime="2012-11-28T21:01">21:01<br />28/11/2012</time>
        <button class="desk" aria-label="Mostra desktop"></button>
      </div>
    </div>`;
  }

  render() {
    return html`
      <header class="titlebar">${icon("app", 15)}<span>ECM Titanium 1.61 - Edit EPROM (grafica) - Pressione Turbo (map 1/1) - 16x16 - 0x1E1770</span>
        <div class="caption">
          <button aria-label="Riduci"><svg width="10" height="4"><path d="M0 0h10v3H0z" fill="#fff"/></svg></button>
          <button aria-label="Ripristina"><svg width="11" height="10"><path d="M3 1h7v6h-2M1 3h6v6H1z" fill="none" stroke="#fff" stroke-width="1.500"/></svg></button>
          <button class="close" aria-label="Chiudi"><svg width="9" height="8"><path d="M1 0l7 8M8 0L1 8" stroke="#fff" stroke-width="2.500"/></svg></button>
        </div>
      </header>
      <nav class="menu">${menu.map((m) => html`<button>${m}</button>`)}</nav>
      ${this.toolbars()}${this.dataPanel()}
      <div class="main">
        <div class="left">
          <div class="zoom"><label for="zh">Zoom H: 16</label><input id="zh" type="range" .value=${"100"} />
            <output>256</output><input class="w30" type="text" aria-label="Larghezza" .value=${"256"} />x<input class="w30" type="text" aria-label="Fattore" .value=${"1"} /><spin-buttons label="Fattore"></spin-buttons></div>
          <div class="canvas"><map-chart></map-chart>
            <div class="vbar"><button aria-label="Su">${this.arrow("up")}</button><input type="range" aria-label="Scorrimento" .value=${"0"} /><button aria-label="Giù">${this.arrow("down")}</button></div>
          </div>
          ${this.nav()}
        </div>
        ${this.side()}
      </div>
      <div class="status"><span></span><span></span><span></span><span>Checksum: 85</span></div>
      ${this.taskbar()}`;
  }
}
